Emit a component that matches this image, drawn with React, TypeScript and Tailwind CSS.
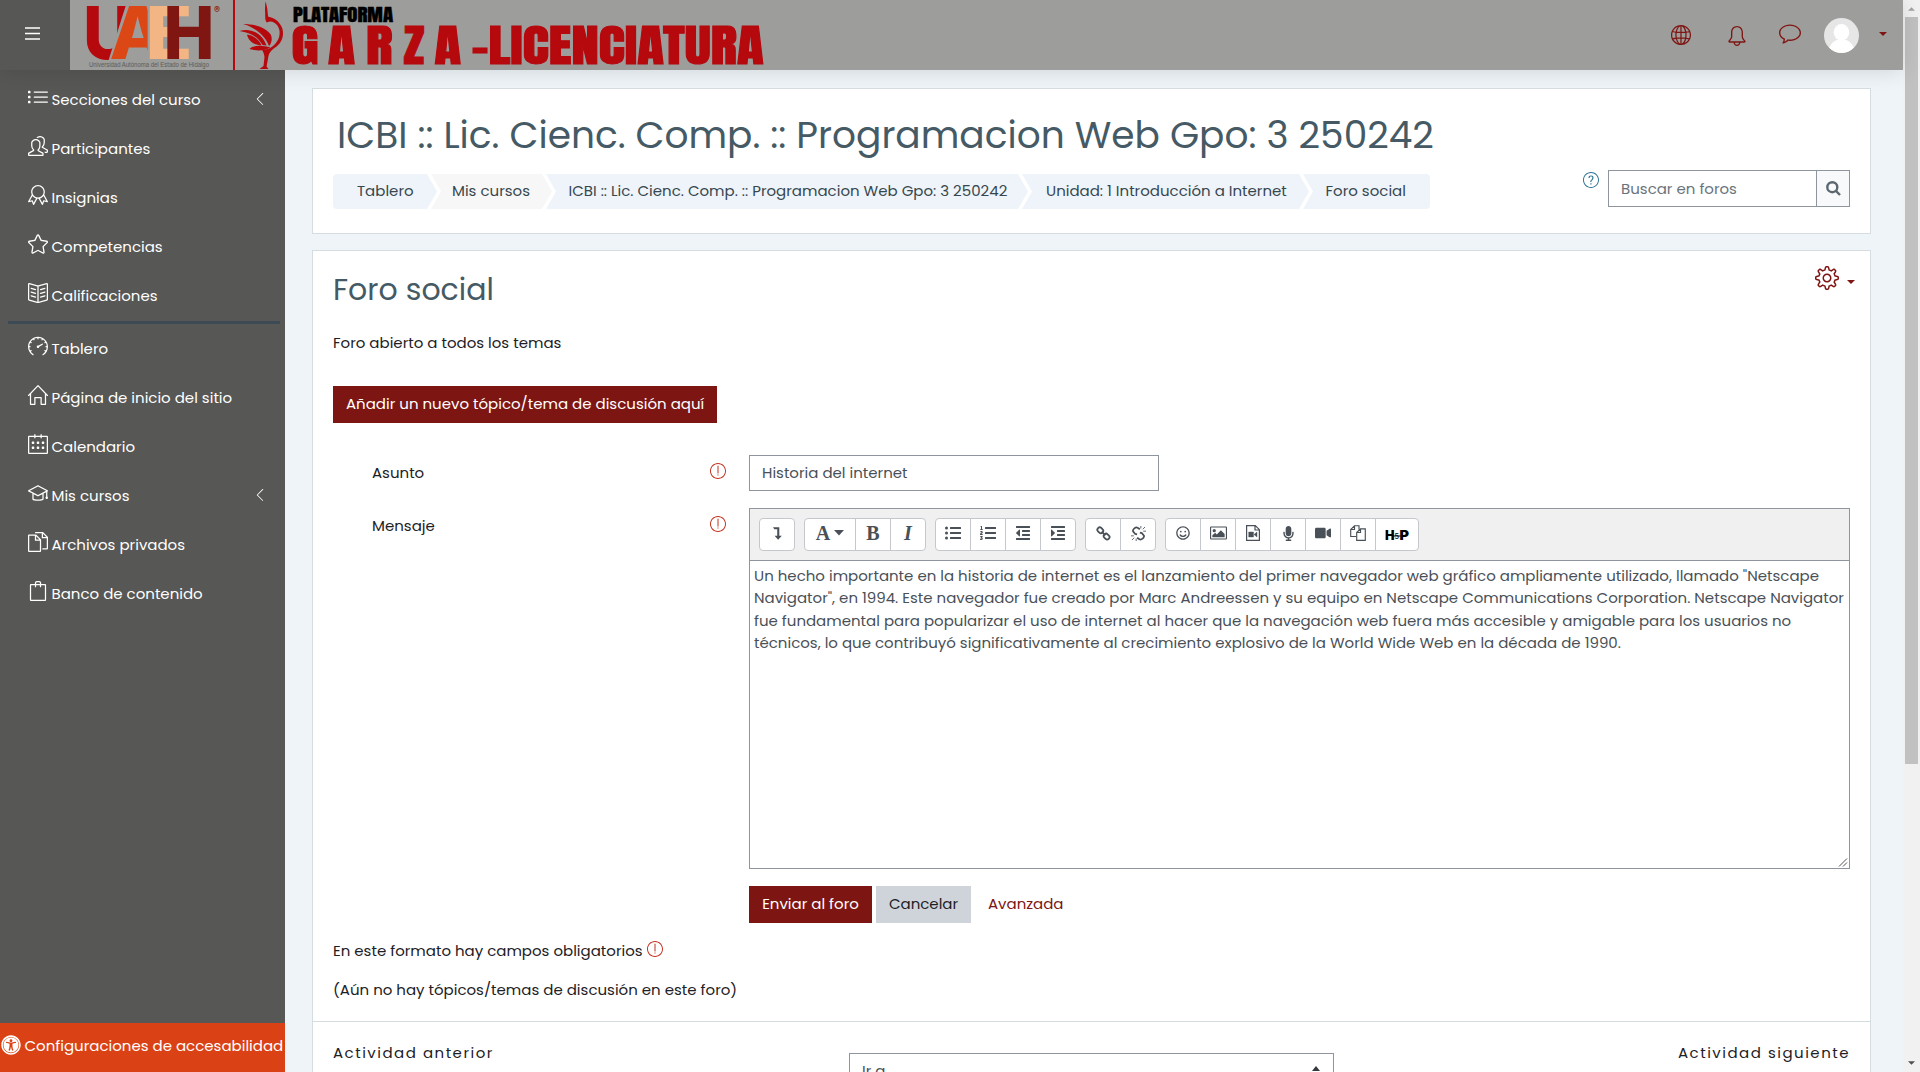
import type { ReactNode } from "react";
import {
  SlArrowLeft, SlBadge, SlBag, SlBell, SlBookOpen, SlBubble, SlCalender, SlDocs, SlExclamation,
  SlGlobe, SlGraduation, SlHome, SlList, SlPeople, SlQuestion, SlSettings, SlSpeedometer, SlStar,
} from "react-icons/sl";
import {
  FaIndent, FaListOl, FaListUl, FaMicrophone, FaOutdent, FaRegSmile, FaUniversalAccess, FaVideo,
} from "react-icons/fa";

const RED = "#b5090e";

function Logo() {
  return (
    <svg width="710" height="70" viewBox="70 0 710 70" className="block" fontFamily="Inter, sans-serif">
      <defs>
        <clipPath id="cutA"><rect x="100" y="0" width="47.6" height="70" /></clipPath>
        <clipPath id="cutU"><path d="M80 0H127.5L108 62H80Z" /></clipPath>
      </defs>
      <g fontWeight="800" fontSize="72.5">
        <text x="83" y="59" fill="#b5090e" textLength="50" lengthAdjust="spacingAndGlyphs" clipPath="url(#cutU)">U</text>
        <text x="109.500" y="59" fill="#dc4716" textLength="57" lengthAdjust="spacingAndGlyphs" clipPath="url(#cutA)">A</text>
        <text x="145.500" y="59" fill="#f3b584" textLength="47" lengthAdjust="spacingAndGlyphs">E</text>
        <text x="163.500" y="59" fill="#7f1611" textLength="51" lengthAdjust="spacingAndGlyphs">H</text>
      </g>
      <text x="214" y="13" fill="#8c1a14" fontSize="9" fontWeight="700">®</text>
      <text x="89" y="66.500" fill="#5c5c5a" fontSize="6.500" fontFamily="'Liberation Sans', sans-serif" textLength="120" lengthAdjust="spacingAndGlyphs">
        Universidad Autónoma del Estado de Hidalgo
      </text>
      <rect x="233" y="0" width="2" height="70" fill={RED} />
      <g fill={RED}>
        <path d="M265.300 1.500C268 8 267.300 12 268.300 16.800C274 17.300 280 22 282.300 28.500C284.500 36 281.500 43 276 47C271.500 50 269 52.500 268.300 57L266.600 66.500L268.500 69H259.500L263.500 66L264.500 57C264 53.500 263 51 261.500 49.500C267 50.500 272 47.500 275.500 43.500C280.500 38 281 30 277 25C274 21.300 270 20.500 267 22.500C264.500 21 265.500 15 265 10Z" />
        <path d="M243 24C255 24 266 27.500 271 35C272.500 39 271.500 43.500 269 46C266 37 256 27.500 243 24Z" />
        <path d="M239.500 31C250 27.500 262 32.500 266.500 45.500L262.500 45C258.500 37 250 32.500 239.500 31Z" />
        <path d="M247 34.500C254 35.500 259.500 40 261.500 45.500C254.500 45 248.500 41.500 247 34.500Z" />
        <path d="M249.500 49C254 44.500 263 45.500 270.500 47.500C265 50.500 257 51.500 249.500 49Z" />
      </g>
      <g fontFamily="Anton, Inter, sans-serif">
        <text x="293" y="22" fontSize="18" fill="#000" stroke="#000" strokeWidth="0.400" textLength="100" lengthAdjust="spacingAndGlyphs">PLATAFORMA</text>
        <g fontSize="45" fill={RED} stroke={RED} strokeWidth="1">
          <text x="291.500" y="64.300" textLength="27" lengthAdjust="spacingAndGlyphs">G</text>
          <text x="328" y="64.300" textLength="27" lengthAdjust="spacingAndGlyphs">A</text>
          <text x="366" y="64.300" textLength="26.500" lengthAdjust="spacingAndGlyphs">R</text>
          <text x="403.500" y="64.300" textLength="21" lengthAdjust="spacingAndGlyphs">Z</text>
          <text x="434.500" y="64.300" textLength="26.500" lengthAdjust="spacingAndGlyphs">A</text>
          <text x="471.500" y="64.300" textLength="292" lengthAdjust="spacingAndGlyphs">-LICENCIATURA</text>
        </g>
      </g>
    </svg>
  );
}

function Header() {
  return (
    <header className="relative z-10 flex h-[70px] w-[1903px] shrink-0 items-center bg-[#9d9d9b] shadow-[0_2px_20px_rgba(0,0,0,0.12)]">
      <button className="flex h-[70px] w-[70px] flex-col justify-center bg-[#575755] pl-[25px]">
        <svg viewBox="0 0 15 13" className="-mt-[3px] h-[13px] w-[15px]" stroke="#fff" strokeWidth="1.500">
          <path d="M0 1H15M0 6.500H15M0 12H15" />
        </svg>
      </button>
      <Logo />
      <div className="ml-auto flex items-center pr-4 text-[#7f1512]">
        <SlGlobe className="-mt-px mr-[36px] size-5" />
        <SlBell className="mt-px mr-[32px] size-5" />
        <SlBubble className="-mt-0.5 mr-[23px] size-[22px]" />
        <svg viewBox="0 0 35 35" className="mr-5 size-[35px] rounded-full bg-[#e6e6e6]" fill="#fff">
          <ellipse cx="17.500" cy="14.300" rx="7.800" ry="8.300" />
          <path d="M5 30C8 24 11 21.500 17.500 21.500S27 24 30 30C27 33 23 35 17.500 35S8 33 5 30Z" />
        </svg>
        <svg viewBox="0 0 8 4" className="-mt-[3px] h-1 w-2" fill="#7f1512"><path d="M0 0H8L4 4Z" /></svg>
      </div>
    </header>
  );
}

type Item = { icon: typeof SlList; label: string; arrow?: boolean };
const courseItems: Item[] = [
  { icon: SlList, label: "Secciones del curso", arrow: true },
  { icon: SlPeople, label: "Participantes" },
  { icon: SlBadge, label: "Insignias" },
  { icon: SlStar, label: "Competencias" },
  { icon: SlBookOpen, label: "Calificaciones" },
];
const siteItems: Item[] = [
  { icon: SlSpeedometer, label: "Tablero" },
  { icon: SlHome, label: "Página de inicio del sitio" },
  { icon: SlCalender, label: "Calendario" },
  { icon: SlGraduation, label: "Mis cursos", arrow: true },
  { icon: SlDocs, label: "Archivos privados" },
  { icon: SlBag, label: "Banco de contenido" },
];

function NavItem({ icon: Icon, label, arrow }: Item) {
  return (
    <a className="flex h-[49px] items-center pr-[19px] pl-7">
      <Icon className="-mt-1 size-5 shrink-0" />
      <span className="mt-[3px] ml-[3.500px] whitespace-nowrap">{label}</span>
      {arrow && <SlArrowLeft className="ml-auto size-[12px]" />}
    </a>
  );
}

function Sidebar() {
  return (
    <aside className="flex w-[285px] shrink-0 flex-col bg-[#575755] pt-1 text-white">
      {courseItems.map((i) => <NavItem key={i.label} {...i} />)}
      <div className="mt-0.5 -mb-px ml-2 h-[3px] w-[272px] shrink-0 bg-[#3b4a54]" />
      {siteItems.map((i) => <NavItem key={i.label} {...i} />)}
      <div className="mt-auto flex h-[49px] items-center bg-[#da4216] pb-[3px] pl-px">
        <FaUniversalAccess className="-mt-0.5 size-5 shrink-0" />
        <span className="ml-[3.500px] whitespace-nowrap">Configuraciones de accesabilidad</span>
      </div>
    </aside>
  );
}

const crumbs = [
  { label: "Tablero", cls: "w-[104px] pl-6 bg-[#eef4f9] rounded-l [clip-path:polygon(0_0,calc(100%-10px)_0,100%_50%,calc(100%-10px)_100%,0_100%)]" },
  { label: "Mis cursos", cls: "-ml-[6px] w-[121px] pl-[21px] bg-[#f7f7f7] [clip-path:polygon(0_0,calc(100%-10px)_0,100%_50%,calc(100%-10px)_100%,0_100%,10px_50%)]" },
  { label: "ICBI :: Lic. Cienc. Comp. :: Programacion Web Gpo: 3 250242", cls: "-ml-[6px] w-[482px] pl-[22.500px] bg-[#eef4f9] [clip-path:polygon(0_0,calc(100%-10px)_0,100%_50%,calc(100%-10px)_100%,0_100%,10px_50%)]" },
  { label: "Unidad: 1 Introducción a Internet", cls: "-ml-[6px] w-[287px] pl-6 bg-[#eef4f9] [clip-path:polygon(0_0,calc(100%-10px)_0,100%_50%,calc(100%-10px)_100%,0_100%,10px_50%)]" },
  { label: "Foro social", cls: "-ml-[6px] w-[127px] pl-[22.500px] bg-[#eef4f9] rounded-r [clip-path:polygon(0_0,100%_0,100%_100%,0_100%,10px_50%)]" },
];

function PageHeader() {
  return (
    <section className="h-[146px] border border-[#d5dde1] bg-white px-5">
      <h1 className="mt-[23px] ml-1 text-[37.500px] leading-[46px] whitespace-nowrap text-[#455a64]">
        ICBI :: Lic. Cienc. Comp. :: Programacion Web Gpo: 3 250242
      </h1>
      <div className="mt-3 flex">
        <nav className="mt-1 flex h-[35px] text-[#37474f]">
          {crumbs.map((c) => (
            <a key={c.label} className={"flex items-center whitespace-nowrap " + c.cls}>{c.label}</a>
          ))}
        </nav>
        <SlQuestion className="mt-0.5 mr-[9px] ml-auto size-4 text-[#2f7396]" />
        <div className="flex h-[37px] w-[242px] border border-[#8f959e]">
          <div className="flex-1 pl-3 leading-[35px] text-[#6a737b]">Buscar en foros</div>
          <div className="flex w-[33px] items-center justify-center border-l border-[#8f959e] bg-[#f8f9fa]">
            <svg viewBox="0 0 15 15" className="-mt-px size-[15px]" fill="none" stroke="#5c6770" strokeWidth="2.400">
              <circle cx="6.300" cy="6.200" r="5" /><path d="M10 10L14 14" />
            </svg>
          </div>
        </div>
      </div>
    </section>
  );
}

function Group({ children }: { children: ReactNode }) {
  return <div className="flex h-[33px] divide-x divide-[#c4c8cc] rounded border border-[#c4c8cc] bg-white">{children}</div>;
}
function Tool({ children, cls = "w-[35px] last:w-[34px]" }: { children: ReactNode; cls?: string }) {
  return <div className={"flex items-center justify-center pb-[3px] " + cls}>{children}</div>;
}

function Toolbar() {
  return (
    <div className="flex h-[52px] items-center gap-[9px] border-b border-[#8f959e] bg-[#f0f0f0] pl-[9px] text-base text-[#495057]">
      <Group>
        <Tool>
          <svg viewBox="0 0 10 14" className="h-[13px] w-[9px]" fill="currentColor"><path d="M0 0H7V9.500H9.800L5.700 14L1.800 9.500H4.700V2.200H1.500Z" /></svg>
        </Tool>
      </Group>
      <Group>
        <Tool cls="w-[51px] gap-1">
          <span className="font-['Liberation_Serif',serif] text-[20px] leading-none font-bold">A</span>
          <svg viewBox="0 0 10 6" className="h-[6px] w-[10px]" fill="currentColor"><path d="M0 0H10L5 5.500Z" /></svg>
        </Tool>
        <Tool><span className="font-['Liberation_Serif',serif] text-[20px] leading-none font-bold">B</span></Tool>
        <Tool><span className="font-['Liberation_Serif',serif] text-[20px] leading-none font-bold italic">I</span></Tool>
      </Group>
      <Group>
        <Tool><FaListUl /></Tool>
        <Tool><FaListOl /></Tool>
        <Tool><FaOutdent /></Tool>
        <Tool><FaIndent /></Tool>
      </Group>
      <Group>
        <Tool>
          <svg viewBox="0 0 16 16" className="size-[15px]" fill="none" stroke="currentColor" strokeWidth="1.900">
            <rect x="-3.300" y="-2.500" width="6.600" height="5" rx="2.300" transform="translate(4.600 4.600) rotate(45)" />
            <rect x="-3.300" y="-2.500" width="6.600" height="5" rx="2.300" transform="translate(11.300 11.300) rotate(45)" />
            <path d="M6 6L10 10" />
          </svg>
        </Tool>
        <Tool>
          <svg viewBox="0 0 16 16" className="size-[15px]" fill="none" stroke="currentColor" strokeWidth="1.900">
            <path d="M9.500 3.500L7 1.800C5 .800 1.500 3.500 2.200 5.800L4.500 8.500L6.500 9" />
            <path d="M6.500 12.500L9 14.200C11 15.200 14.500 12.500 13.800 10.200L11.500 7.500L9.500 7" />
            <path d="M10.500 0V2.500M12.500 3.500L15 1M13 5.500H16M5.500 13.500V16M3.500 12.500L1 15M0 10.500H3" strokeWidth="0.900" />
          </svg>
        </Tool>
      </Group>
      <Group>
        <Tool><FaRegSmile className="size-[14px]" /></Tool>
        <Tool>
          <svg viewBox="0 0 18 14" className="h-[14px] w-[17px]" fill="currentColor">
            <path d="M1.200 0H16.800Q18 0 18 1.200V12.800Q18 14 16.800 14H1.200Q0 14 0 12.800V1.200Q0 0 1.200 0ZM1.200 1.200V12.800H16.800V1.200Z" fillRule="evenodd" />
            <circle cx="4.500" cy="4.500" r="1.700" /><path d="M2.500 11.500V9.500L5.500 6.800L7.200 8.500L11.500 4.200L15.500 8V11.500Z" />
          </svg>
        </Tool>
        <Tool>
          <svg viewBox="0 0 14 16" className="h-4 w-[14px]" fill="none" stroke="currentColor" strokeWidth="1.200">
            <path d="M.600 .600H9.300L13.400 4.700V15.400H.600ZM9 .600V5H13.400" />
            <path d="M3.500 7H7.500V12H2.700V7ZM8 9.500L11 7V12Z" fill="currentColor" strokeWidth="0.400" />
          </svg>
        </Tool>
        <Tool><FaMicrophone className="size-[15px]" /></Tool>
        <Tool><FaVideo className="size-4" /></Tool>
        <Tool>
          <svg viewBox="0 0 16 16" className="size-4" fill="none" stroke="currentColor" strokeWidth="1.150">
            <path d="M6 11.500H.700V4.500L4.500 .700H9V4.500M4.500 .700V4.500H.700" />
            <path d="M6.700 7.500L10.500 3.800H15.300V15.300H6.700ZM10.500 3.800V7.500H6.700" />
          </svg>
        </Tool>
        <Tool cls="w-[42px] pt-[3px]">
          <svg viewBox="0 0 24 12" className="h-3 w-6" fontFamily="Inter, sans-serif" fontWeight="900" fill="#000">
            <text x="0" y="11" fontSize="13" textLength="9.500" lengthAdjust="spacingAndGlyphs">H</text>
            <text x="9.600" y="9.500" fontSize="7" fontWeight="500" textLength="4.500" lengthAdjust="spacingAndGlyphs">5</text>
            <text x="14.500" y="11" fontSize="13" textLength="9.500" lengthAdjust="spacingAndGlyphs">P</text>
            <path d="M8 7H15.500" stroke="#000" strokeWidth="1" />
          </svg>
        </Tool>
      </Group>
    </div>
  );
}

function Required() {
  return <SlExclamation className="size-4 text-[#c2321f]" />;
}

function Forum() {
  return (
    <section className="mt-4 flex h-[900px] flex-col border border-[#d5dde1] bg-white pt-5 text-[#1d2125]">
      <div className="flex flex-col px-5">
        <div className="flex h-9 items-center">
          <h2 className="mt-0.5 text-[30px] leading-9 text-[#455a64]">Foro social</h2>
          <div className="-mt-[23px] ml-auto flex items-center gap-2 text-[#7f1512]">
            <SlSettings className="size-6" />
            <svg viewBox="0 0 8 4" className="mt-2 -mr-[5px] h-1 w-2" fill="currentColor"><path d="M0 0H8L4 4Z" /></svg>
          </div>
        </div>
        <p className="mt-[25px] leading-[22.500px]">Foro abierto a todos los temas</p>
        <button className="mt-[31.500px] h-[37px] w-[384px] bg-[#7d1613] pb-px pl-[13px] text-left whitespace-nowrap text-white">
          Añadir un nuevo tópico/tema de discusión aquí
        </button>
        <div className="mt-8 flex h-9">
          <div className="mt-[7px] flex h-[22px] w-[416px] shrink-0 items-start justify-between pr-[23px] pl-[39px]">
            <span>Asunto</span>
            <span className="mt-px"><Required /></span>
          </div>
          <div className="w-[410px] border border-[#8f959e] pl-3 leading-[34px] text-[#495057]">Historia del internet</div>
        </div>
        <div className="mt-[17px] flex h-[361px]">
          <div className="mt-[7px] flex h-[22px] w-[416px] shrink-0 items-start justify-between pr-[23px] pl-[39px]">
            <span>Mensaje</span>
            <span className="mt-px"><Required /></span>
          </div>
          <div className="relative w-[1101px] border border-[#8f959e]">
            <Toolbar />
            <div className="pt-[3.500px] pl-1 leading-[22.500px] whitespace-nowrap text-[#495057]">
              <p>Un hecho importante en la historia de internet es el lanzamiento del primer navegador web gráfico ampliamente utilizado, llamado "Netscape</p>
              <p>Navigator", en 1994. Este navegador fue creado por Marc Andreessen y su equipo en Netscape Communications Corporation. Netscape Navigator</p>
              <p>fue fundamental para popularizar el uso de internet al hacer que la navegación web fuera más accesible y amigable para los usuarios no</p>
              <p>técnicos, lo que contribuyó significativamente al crecimiento explosivo de la World Wide Web en la década de 1990.</p>
            </div>
            <svg viewBox="0 0 10 10" className="absolute right-px bottom-px size-[10px]" stroke="#555" strokeWidth="1"><path d="M1 9.500L9 1.500M5 9.500L9 5.500" /></svg>
          </div>
        </div>
        <div className="mt-[17px] ml-[416px] flex h-[37px] leading-[36px]">
          <button className="w-[123px] bg-[#7d1613] pb-px text-white">Enviar al foro</button>
          <button className="ml-1 w-[95px] bg-[#ced4da] pb-px">Cancelar</button>
          <a className="ml-[17px] text-[#7d1613]">Avanzada</a>
        </div>
        <p className="mt-[16.500px] flex leading-[22.500px]">
          <span>En este formato hay campos obligatorios</span>
          <span className="mt-px ml-[4px]"><Required /></span>
        </p>
        <p className="mt-[16.500px] leading-[22.500px]">(Aún no hay tópicos/temas de discusión en este foro)</p>
      </div>
      <div className="mt-[19.500px] flex items-start justify-between border-t border-[#d5dde1] px-5 pt-5">
        <span className="w-[516px] leading-[22.500px] tracking-[1.500px]">Actividad anterior</span>
        <div className="mt-[11px] flex h-[37px] w-[485px] justify-between border border-[#8f959e] pr-[13px] pl-3 leading-[34px] text-[#495057]">
          <span>Ir a</span>
          <svg viewBox="0 0 8 12" className="mt-[12px] h-3 w-2" fill="#343a40"><path d="M0 5L4 0L8 5ZM0 7H8L4 12Z" /></svg>
        </div>
        <span className="w-[516px] text-right leading-[22.500px] tracking-[1.500px]">Actividad siguiente</span>
      </div>
    </section>
  );
}

export default function App() {
  return (
    <div className="flex h-[1072px] w-[1920px] overflow-hidden bg-[#eef4f8] font-[Poppins,Inter,sans-serif] text-[15px] leading-[22.500px] font-normal">
      <div className="flex w-[1903px] flex-col">
        <Header />
        <div className="flex h-[1002px]">
          <Sidebar />
          <main className="ml-[27px] w-[1559px] pt-[18px]">
            <PageHeader />
            <Forum />
          </main>
        </div>
      </div>
      <div className="flex w-[17px] flex-col items-center bg-[#f1f1f1]">
        <svg viewBox="0 0 8 4" className="mt-[7px] h-1 w-[7px]" fill="#a3a3a3"><path d="M0 4H8L4 0Z" /></svg>
        <div className="mt-[6px] h-[747px] w-[13px] bg-[#c1c1c1]" />
        <svg viewBox="0 0 8 4" className="mt-auto mb-[7px] h-1 w-[7px]" fill="#505050"><path d="M0 0H8L4 4Z" /></svg>
      </div>
    </div>
  );
}
